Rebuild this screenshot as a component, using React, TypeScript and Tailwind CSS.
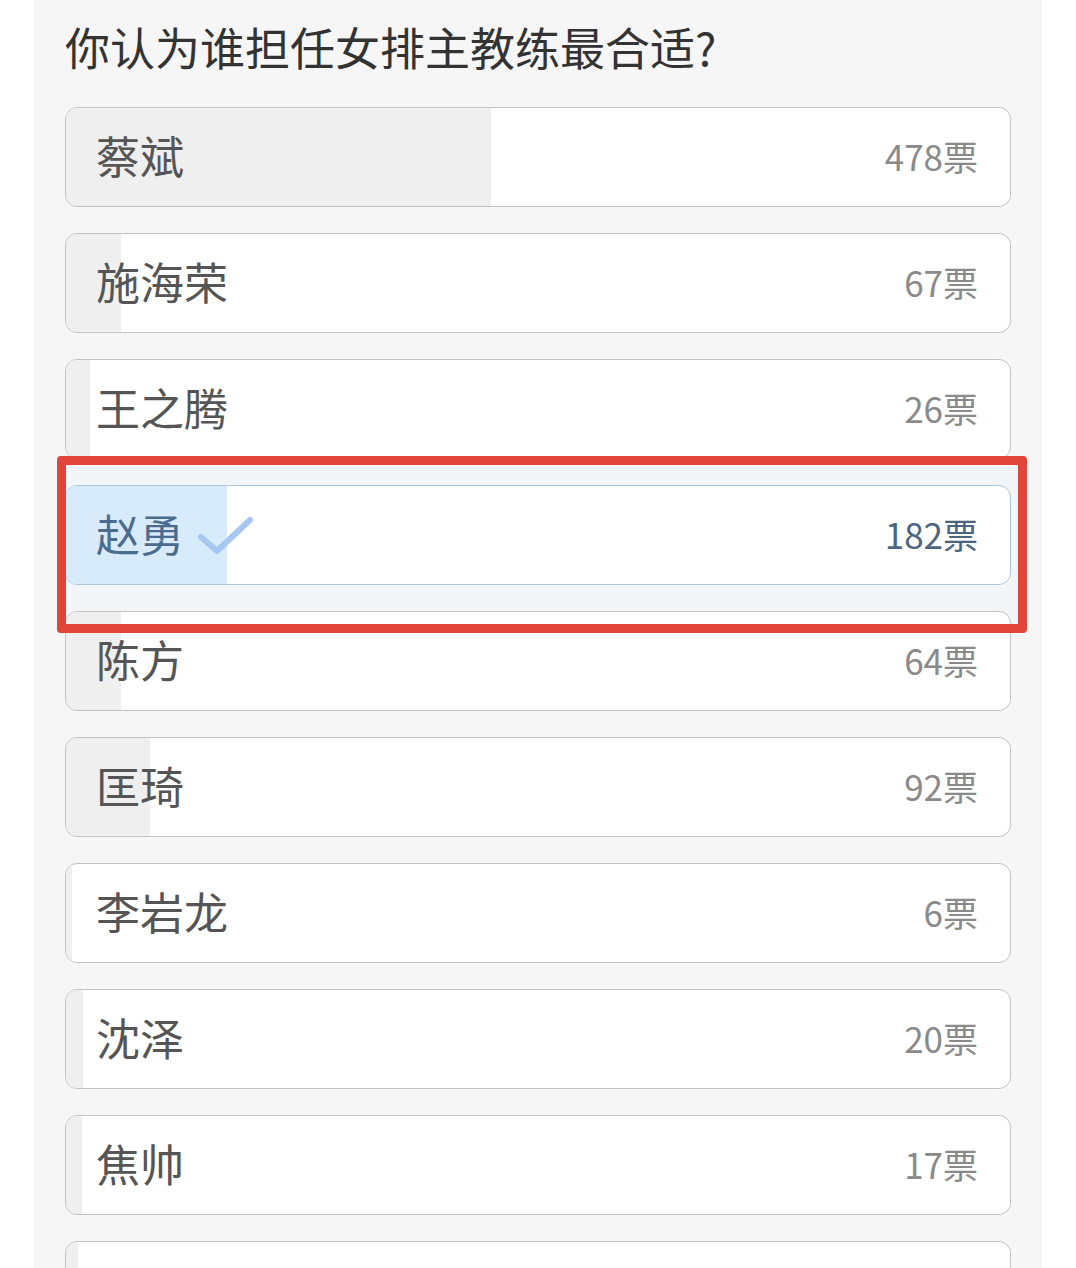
import React from "react";

type Opt = { name: string; votes: number; fill: number; selected?: boolean };

const options: Opt[] = [
  { name: "蔡斌", votes: 478, fill: 425 },
  { name: "施海荣", votes: 67, fill: 55 },
  { name: "王之腾", votes: 26, fill: 24 },
  { name: "赵勇", votes: 182, fill: 161, selected: true },
  { name: "陈方", votes: 64, fill: 55 },
  { name: "匡琦", votes: 92, fill: 84 },
  { name: "李岩龙", votes: 6, fill: 6 },
  { name: "沈泽", votes: 20, fill: 17 },
  { name: "焦帅", votes: 17, fill: 16 },
];

const font = { fontFamily: '"Noto Sans CJK SC", "Noto Sans", sans-serif' };

function Check() {
  return (
    <svg width="56" height="44" viewBox="0 0 56 44" className="ml-[14px] mt-[8px]">
      <path
        d="M3 22 L19 36 L52 5"
        fill="none"
        stroke="#a6c8f0"
        strokeWidth="6"
        strokeLinecap="round"
        strokeLinejoin="round"
      />
    </svg>
  );
}

function Card({ o }: { o: Opt }) {
  if (o.selected) {
    return (
      <div className="relative">
        <div className="absolute -left-[8px] -top-[29px] -right-[16px] -bottom-[48px] bg-[#f3f6f8] z-0" />
        <div className="relative z-[1] h-[100px] rounded-[12px] border-[1.5px] border-[#a9c7de] bg-white overflow-hidden flex items-center justify-between pl-[30px] pr-[32px] pb-[4px]">
          <div className="absolute left-0 top-0 bottom-0 bg-[#d8ebfb]" style={{ width: o.fill }} />
          <div className="relative flex items-center">
            <span className="text-[44px] leading-none text-[#4a6c8e]">{o.name}</span>
            <Check />
          </div>
          <span className="relative text-[35px] leading-none text-[#4b6580]">{o.votes}票</span>
        </div>
        <div className="absolute -left-[8px] -top-[29px] -right-[16px] -bottom-[48px] border-[9px] border-[#e1453a] rounded-[4px] z-10 pointer-events-none" />
      </div>
    );
  }
  return (
    <div className="relative h-[100px] rounded-[12px] border-[1.5px] border-[#c2c2c2] bg-white overflow-hidden flex items-center justify-between pl-[30px] pr-[32px] pb-[4px]">
      <div className="absolute left-0 top-0 bottom-0 bg-[#efefef]" style={{ width: o.fill }} />
      <span className="relative text-[44px] leading-none text-[#555555]">{o.name}</span>
      <span className="relative text-[35px] leading-none text-[#8a8a8a]">{o.votes}票</span>
    </div>
  );
}

export default function App() {
  return (
    <div className="w-full h-[1268px] bg-white overflow-hidden" style={font}>
      <div className="ml-[34px] w-[1008px] h-full bg-[#f6f6f6] pt-[24px] px-[31px]">
        <h1 className="text-[45px] leading-none text-[#333333] font-normal mb-[38px]">
          你认为谁担任女排主教练最合适?
        </h1>
        <div className="flex flex-col gap-[26px]">
          {options.map((o) => (
            <Card key={o.name} o={o} />
          ))}
          <div className="relative h-[100px] rounded-[12px] border-[1.5px] border-[#c2c2c2] bg-white overflow-hidden">
            <div className="absolute left-0 top-0 bottom-0 bg-[#efefef] w-[12px]" />
          </div>
        </div>
      </div>
    </div>
  );
}
